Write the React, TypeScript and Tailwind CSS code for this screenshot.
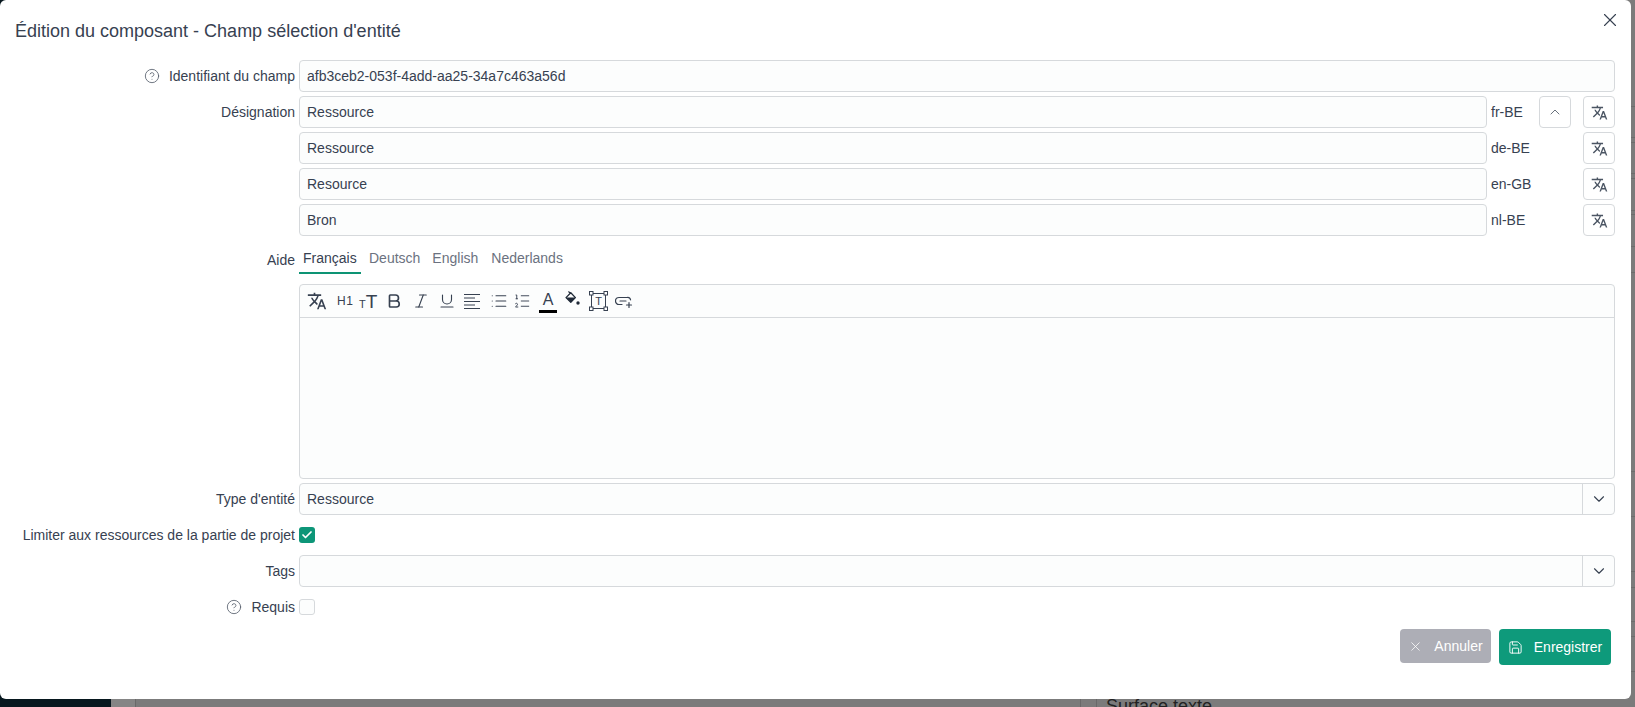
import { Check, ChevronDown, ChevronUp, CircleHelp, Save, X, Bold, Italic, Underline, List, ListOrdered } from "lucide-react";
import { MdTranslate } from "react-icons/md";

const FONT = "font-['Liberation_Sans',Arial,sans-serif]";
const STRIP_ROWS = [107, 31, 5, 31, 5, 32, 4, 32, 26, 199, 45, 55, 16, 34, 15, 35];

const locales = [
  { value: "Ressource", lang: "fr-BE", collapse: true },
  { value: "Ressource", lang: "de-BE", collapse: false },
  { value: "Resource", lang: "en-GB", collapse: false },
  { value: "Bron", lang: "nl-BE", collapse: false },
];

function FieldLabel({ children, help }: { children: React.ReactNode; help?: boolean }) {
  return (
    <div className="flex h-8 items-center justify-end text-sm whitespace-nowrap text-[#374151]">
      {help && <CircleHelp size={16} strokeWidth={1.25} className="mr-[9px] text-[#555e6b]" />}
      {children}
    </div>
  );
}

function TextField({ value }: { value: string }) {
  return (
    <input
      readOnly
      value={value}
      className="h-8 w-full rounded border border-[#d6d9dc] bg-[#fcfdfd] px-[7px] text-sm text-[#374151] outline-none"
    />
  );
}

function SelectField({ value }: { value: string }) {
  return (
    <div className="flex h-8 w-full rounded border border-[#d6d9dc] bg-[#fcfdfd] text-sm text-[#374151]">
      <div className="flex flex-1 items-center px-[7px]">{value}</div>
      <div className="flex w-8 items-center justify-center border-l border-[#d6d9dc]">
        <ChevronDown size={18} strokeWidth={1.5} />
      </div>
    </div>
  );
}

function SquareButton({ children, className }: { children: React.ReactNode; className?: string }) {
  return (
    <button className={`flex h-8 w-8 items-center justify-center rounded border border-[#d6d9dc] bg-white text-[#4b5563] ${className ?? ""}`}>
      {children}
    </button>
  );
}

function BucketIcon() {
  return (
    <svg width="15" height="15" viewBox="0 0 15 15" className="-mt-[5px] ml-[8px]">
      <path d="M1 6.6 5.8 1.8 10.4 6.6 5.8 11.2Z" fill="none" stroke="#1f2937" strokeWidth="1.3" strokeLinejoin="round" />
      <path d="M1 6.6H10.4L5.8 11.2Z" fill="#1f2937" />
      <path d="M3.4 .6 5.8 2.4" stroke="#1f2937" strokeWidth="1.2" />
      <circle cx="13" cy="12" r="1.7" fill="#1f2937" />
    </svg>
  );
}

function FrameIcon() {
  return (
    <div className="relative ml-[9px] flex h-5 w-[19px] items-center justify-center">
      <svg width="19" height="20" viewBox="0 0 19 20" className="absolute inset-0">
        <path d="M2.5 2.5V17.5M16.5 2.5V17.5M2.5 2.5H16.5M2.5 17.5H16.5" stroke="#374151" strokeWidth="1" />
        <rect x="0.5" y="0.5" width="3.5" height="3.5" fill="#fff" stroke="#374151" />
        <rect x="15" y="0.5" width="3.5" height="3.5" fill="#fff" stroke="#374151" />
        <rect x="0.5" y="16" width="3.5" height="3.5" fill="#fff" stroke="#374151" />
        <rect x="15" y="16" width="3.5" height="3.5" fill="#fff" stroke="#374151" />
      </svg>
      <span className="relative text-[11px] leading-none text-[#374151]">T</span>
    </div>
  );
}

function LinkPlusIcon() {
  return (
    <svg width="18" height="12" viewBox="0 0 18 12" fill="none" stroke="#374151" strokeWidth="1.2" strokeLinecap="round" className="mt-[2px] ml-[7px]">
      <path d="M7 8.5H4A3.2 3.2 0 0 1 4 1.5H12A3.2 3.2 0 0 1 15.6 4" />
      <path d="M5 5H11" />
      <path d="M14 6.5V11.5M11.5 9H16.5" />
    </svg>
  );
}

function Toolbar() {
  return (
    <div className="flex h-[33px] items-center border-b border-[#d6d9dc] pl-[7px] text-[#374151]">
      <MdTranslate size={20} />
      <span className="ml-[10px] w-[15px] text-xs leading-none tracking-[0.5px]">H1</span>
      <span className="ml-[7px] flex w-[18px] items-baseline leading-none font-light">
        <span className="text-[11px]">T</span>
        <span className="text-[19px]">T</span>
      </span>
      <Bold size={18} strokeWidth={2.2} className="ml-2" />
      <Italic size={18} strokeWidth={1.5} className="ml-[9px]" />
      <Underline size={18} strokeWidth={1.5} className="ml-2" />
      <svg width="16" height="15" viewBox="0 0 16 15" stroke="#374151" className="ml-2">
        <path d="M0 .5H16M0 4H11M0 7.5H16M0 11H11M0 14.5H16" />
      </svg>
      <List size={18} strokeWidth={1.5} className="ml-[10px]" />
      <ListOrdered size={18} strokeWidth={1.25} className="ml-[5px]" />
      <div className="ml-2 flex w-[18px] flex-col items-center pt-[2px]">
        <span className="text-base leading-4">A</span>
        <div className="mt-[2px] h-[3px] w-[18px] bg-black" />
      </div>
      <BucketIcon />
      <FrameIcon />
      <LinkPlusIcon />
    </div>
  );
}

function HelpTabs() {
  return (
    <div className="flex h-[34px] items-start text-sm text-[#6b7280]">
      <div className="h-[34px] w-[62px] border-b-2 border-[#0d9474] pt-2 pl-1 text-[#374151]">Français</div>
      <div className="ml-2 pt-2">Deutsch</div>
      <div className="ml-3 pt-2">English</div>
      <div className="ml-[13px] pt-2">Nederlands</div>
    </div>
  );
}

function Backdrop() {
  return (
    <div className="flex h-[707px] w-full overflow-hidden bg-[#7b7b7b]">
      <div className="w-[111px] bg-[#07171e]" />
      <div className="w-[25px] border-r border-[#696969] bg-[#858585]" />
      <div className="w-[945px] border-r border-[#696969]" />
      <div className="w-[16px] border-r border-[#696969]" />
      <div className="flex-1 pt-[692px] pl-[9px] text-lg text-[#222]">Surface texte</div>
      <div className="flex w-[4px] flex-col">
        {STRIP_ROWS.map((height, i) => (
          <div key={i} className="border-b border-[#6c6c6c]" style={{ height }} />
        ))}
      </div>
    </div>
  );
}

export default function App() {
  return (
    <div className={`relative h-[707px] overflow-hidden ${FONT}`}>
      <Backdrop />
      <div className="absolute top-0 left-0 flex h-[699px] w-[1631px] flex-col rounded-md bg-white">
        <button className="absolute top-[9px] right-[10px] text-[#374151]">
          <X size={22} strokeWidth={1.25} />
        </button>
        <h1 className="h-[60px] pt-[17px] pl-[15px] text-lg text-[#374151]">Édition du composant - Champ sélection d'entité</h1>

        <div className="grid grid-cols-[280px_1fr] gap-x-1 gap-y-1 pr-4 pl-[15px]">
          <FieldLabel help>Identifiant du champ</FieldLabel>
          <TextField value="afb3ceb2-053f-4add-aa25-34a7c463a56d" />

          <FieldLabel>Désignation</FieldLabel>
          <div className="flex flex-col gap-1">
            {locales.map((locale) => (
              <div key={locale.lang} className="flex items-center text-sm text-[#374151]">
                <div className="flex-1">
                  <TextField value={locale.value} />
                </div>
                <div className="w-[52px] pl-1">{locale.lang}</div>
                <div className="w-8">
                  {locale.collapse && (
                    <SquareButton>
                      <ChevronUp size={16} strokeWidth={1.25} />
                    </SquareButton>
                  )}
                </div>
                <SquareButton className="ml-3">
                  <MdTranslate size={17} />
                </SquareButton>
              </div>
            ))}
          </div>

          <div className="pt-[10px] text-right text-sm leading-5 text-[#374151]">Aide</div>
          <div>
            <HelpTabs />
            <div className="mt-[10px] h-[195px] rounded border border-[#d6d9dc] bg-[#fcfdfd]">
              <Toolbar />
            </div>
          </div>

          <FieldLabel>Type d'entité</FieldLabel>
          <SelectField value="Ressource" />

          <FieldLabel>Limiter aux ressources de la partie de projet</FieldLabel>
          <div className="flex h-8 items-center">
            <div className="flex h-4 w-4 items-center justify-center rounded-[3px] bg-[#0d9678] text-white">
              <Check size={12} strokeWidth={3.5} />
            </div>
          </div>

          <FieldLabel>Tags</FieldLabel>
          <SelectField value="" />

          <FieldLabel help>Requis</FieldLabel>
          <div className="flex h-8 items-center">
            <div className="h-4 w-4 rounded-[3px] border border-[#d6d9dc] bg-[#fcfdfd]" />
          </div>
        </div>

        <div className="mt-[6px] flex items-start justify-end gap-2 pr-5 text-sm text-white">
          <button className="flex h-[34px] w-[91px] items-center justify-center gap-[11px] rounded bg-[#adaeb6]">
            <X size={15} strokeWidth={1.25} />
            Annuler
          </button>
          <button className="flex h-9 w-28 items-center justify-center gap-[11px] rounded bg-[#0e9a7b]">
            <Save size={15} strokeWidth={1.5} />
            Enregistrer
          </button>
        </div>
      </div>
    </div>
  );
}
